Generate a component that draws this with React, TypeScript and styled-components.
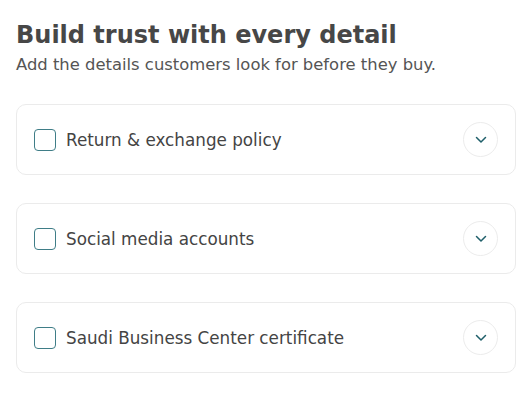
import React from "react";
import styled, { createGlobalStyle } from "styled-components";

const Global = createGlobalStyle`
  html, body { margin: 0; padding: 0; background: #ffffff; }
  body { font-family: "DejaVu Sans", "Noto Sans", sans-serif; color: #444; }
`;

const Page = styled.div`
  padding: 20px 13px 0 16px;
  display: flex;
  flex-direction: column;
`;

const Title = styled.h1`
  margin: 0;
  font-size: 24px;
  line-height: 30px;
  font-weight: 700;
  color: #474747;
`;

const Subtitle = styled.p`
  margin: 4px 0 0;
  font-size: 16.4px;
  line-height: 22px;
  color: #555;
`;

const List = styled.div`
  margin-top: 28px;
  display: flex;
  flex-direction: column;
  gap: 28px;
`;

const Card = styled.div`
  box-sizing: border-box;
  height: 71px;
  border: 1px solid #ebebeb;
  border-radius: 10px;
  display: flex;
  align-items: center;
  padding: 0 17px 0 17px;
`;

const Check = styled.span`
  box-sizing: border-box;
  width: 22px;
  height: 22px;
  border: 1.5px solid #3f7d87;
  border-radius: 4px;
  flex: none;
`;

const Label = styled.span`
  margin-left: 10px;
  flex: 1;
  font-size: 16.8px;
  color: #444;
`;

const Toggle = styled.button`
  box-sizing: border-box;
  width: 35px;
  height: 35px;
  border-radius: 50%;
  border: 1px solid #ececec;
  background: #fff;
  display: flex;
  align-items: center;
  justify-content: center;
  padding: 0;
`;

const Chevron = () => (
  <svg width="12" height="8" viewBox="0 0 12 8" fill="none">
    <path d="M1.5 1.5L6 6L10.5 1.5" stroke="#1f5f6a" strokeWidth="1.5" strokeLinecap="round" strokeLinejoin="round" />
  </svg>
);

const items = [
  "Return & exchange policy",
  "Social media accounts",
  "Saudi Business Center certificate",
];

export default function App() {
  return (
    <>
      <Global />
      <Page>
        <Title>Build trust with every detail</Title>
        <Subtitle>Add the details customers look for before they buy.</Subtitle>
        <List>
          {items.map((t) => (
            <Card key={t}>
              <Check />
              <Label>{t}</Label>
              <Toggle>
                <Chevron />
              </Toggle>
            </Card>
          ))}
        </List>
      </Page>
    </>
  );
}
